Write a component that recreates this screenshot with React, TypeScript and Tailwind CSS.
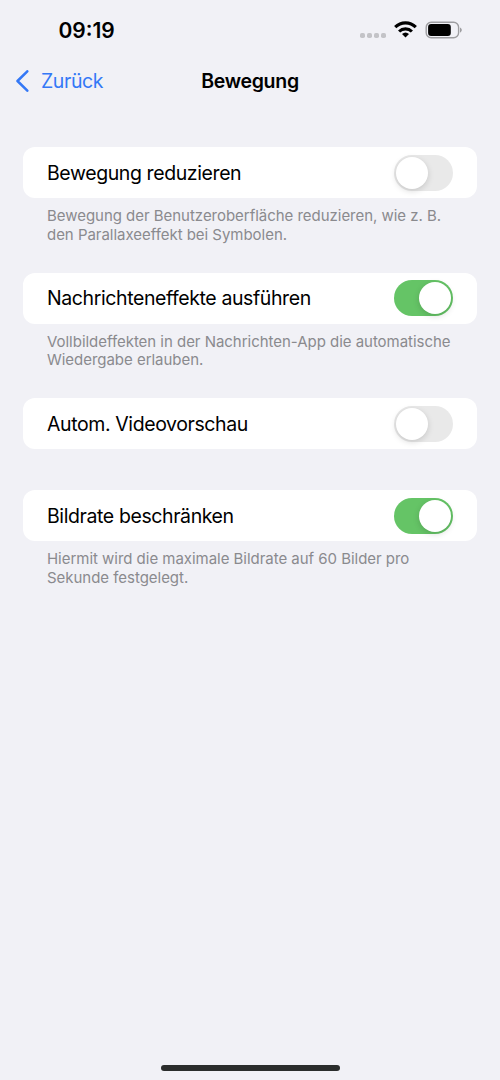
import { useState } from 'react';

interface ToggleProps {
  checked: boolean;
  label: string;
  onChange: () => void;
}

function Toggle({ checked, label, onChange }: ToggleProps) {
  return (
    <button
      role="switch"
      aria-checked={checked}
      aria-label={label}
      onClick={onChange}
      className={`flex h-9 w-[59.5px] items-center rounded-full px-0.5 transition-colors ${
        checked ? 'justify-end bg-[#65c466]' : 'justify-start bg-[#e9e9e9]'
      }`}
    >
      <span className="h-8 w-8 rounded-full bg-white shadow-[0_2px_6px_rgba(0,0,0,0.15)]" />
    </button>
  );
}

interface SettingProps {
  label: string;
  hint?: string[];
  defaultOn?: boolean;
}

function Setting({ label, hint, defaultOn = false }: SettingProps) {
  const [on, setOn] = useState(defaultOn);

  return (
    <section>
      <div className="flex h-[51px] items-center justify-between rounded-xl bg-white pr-6 pl-6">
        <span className="pt-[2px] text-[19.5px] tracking-[-0.4px] text-black">{label}</span>
        <Toggle checked={on} label={label} onChange={() => setOn(!on)} />
      </div>
      {hint && (
        <p className="px-6 pt-[9px] text-[15px] leading-[18.8px] tracking-[-0.03px] text-[#8a8a8e]">
          {hint.map((line) => (
            <span key={line} className="block whitespace-nowrap">
              {line}
            </span>
          ))}
        </p>
      )}
    </section>
  );
}

function StatusBar() {
  return (
    <div className="flex h-[60px] items-center justify-between pr-[38px] pl-[58.5px]">
      <span className="pt-px text-[21px] font-semibold text-black">09:19</span>
      <div className="flex items-center">
        <div className="mt-[11px] mr-2 flex gap-[2.3px]">
          {[0, 1, 2, 3].map((dot) => (
            <span key={dot} className="h-[4.7px] w-[4.7px] rounded-[1.8px] bg-[#c3c3c7]" />
          ))}
        </div>
        {/* Wi-Fi */}
        <svg width="23" height="17" viewBox="0 0 23 17" fill="none" stroke="#000" strokeWidth="3.1" className="mr-2 mb-0.5">
          <path d="M1.2 6.1a14.6 14.6 0 0 1 20.6 0" />
          <path d="M5.1 10.5a9.2 9.2 0 0 1 12.8 0" />
          <path d="M11.5 16.6 8 13.1a5.2 5.2 0 0 1 7 0Z" fill="#000" stroke="none" />
        </svg>
        {/* Battery */}
        <svg width="37" height="18" viewBox="0 0 37 18" className="mb-px">
          <rect x="1.2" y="1.2" width="32.4" height="15.6" rx="5" fill="none" stroke="#9e9ea1" strokeWidth="1.4" />
          <rect x="3.1" y="3.1" width="22.7" height="11.8" rx="3" />
          <path d="M35 6.4v5.2c1-.4 1.8-1.4 1.8-2.6S36 6.8 35 6.4Z" fill="#9e9ea1" />
        </svg>
      </div>
    </div>
  );
}

export default function App() {
  return (
    <div className="flex h-[1080px] w-[500px] flex-col overflow-hidden bg-[#f1f1f6] font-['Inter','Liberation_Sans',sans-serif]">
      <StatusBar />
      <header className="grid h-[41px] grid-cols-[1fr_auto_1fr] items-center">
        <button className="flex items-center pl-[15px] text-[#3478f6]">
          <svg width="14" height="22" viewBox="0 0 14 22" fill="none" className="mr-3">
            <path
              d="M12.3 1.3 2.5 11l9.8 9.7"
              stroke="currentColor"
              strokeWidth="2.5"
              strokeLinecap="round"
              strokeLinejoin="round"
            />
          </svg>
          <span className="pt-[2px] text-[19.5px] tracking-[-0.4px]">Zurück</span>
        </button>
        <h1 className="pt-[2px] text-[19.5px] font-semibold tracking-[-0.3px] text-black">Bewegung</h1>
      </header>

      <main className="flex flex-col px-[23px] pt-[46px]">
        <Setting
          label="Bewegung reduzieren"
          hint={['Bewegung der Benutzeroberfläche reduzieren, wie z. B.', 'den Parallaxeeffekt bei Symbolen.']}
        />
        <div className="h-7" />
        <Setting
          label="Nachrichteneffekte ausführen"
          hint={['Vollbildeffekten in der Nachrichten-App die automatische', 'Wiedergabe erlauben.']}
          defaultOn
        />
        <div className="h-7" />
        <Setting label="Autom. Videovorschau" />
        <div className="h-[41px]" />
        <Setting
          label="Bildrate beschränken"
          hint={['Hiermit wird die maximale Bildrate auf 60 Bilder pro', 'Sekunde festgelegt.']}
          defaultOn
        />
      </main>

      {/* Home indicator */}
      <div className="mx-auto mt-auto mb-[9.5px] h-1.5 w-[179px] rounded-full bg-[#2b2d2c]" />
    </div>
  );
}
